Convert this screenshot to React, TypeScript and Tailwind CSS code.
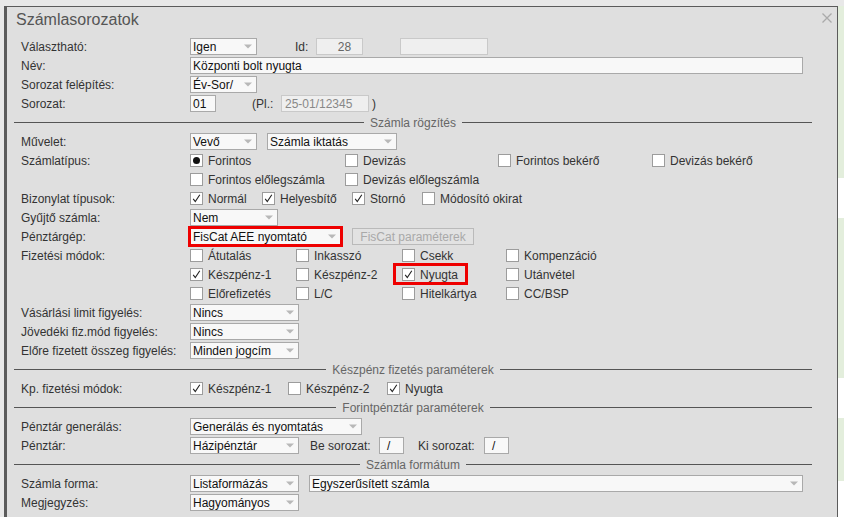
import React from "react";

const font = "font-['Liberation_Sans',Arial,sans-serif]";

function Arrow() {
  return (
    <svg width="8" height="5" viewBox="0 0 8 5" className="shrink-0">
      <path d="M0 0.5 H8 L4 4.5 Z" fill="#b8b8b8" />
    </svg>
  );
}

function Select({ value, className }: { value: string; className: string }) {
  return (
    <div
      className={`h-[17px] flex items-center justify-between border border-[#a9a9a9] bg-[#f8f8f8] pl-[2px] pr-[4px] text-[12px] text-[#111] leading-none ${className}`}
    >
      <span className="whitespace-nowrap">{value}</span>
      <Arrow />
    </div>
  );
}

function Input({ value, className }: { value: string; className: string }) {
  return (
    <div
      className={`h-[17px] flex items-center border border-[#a9a9a9] bg-[#f8f8f8] text-[12px] text-[#111] leading-none whitespace-nowrap ${className}`}
    >
      {value}
    </div>
  );
}

function Check({ label, checked, className = "" }: { label: string; checked?: boolean; className?: string }) {
  return (
    <div className={`flex items-center shrink-0 ${className}`}>
      <div className="w-[13px] h-[13px] border border-[#9c9c9c] bg-white flex items-center justify-center">
        {checked && (
          <svg width="11" height="11" viewBox="0 0 11 11">
            <path d="M2.2 5.8 L4.3 8.6 L8.8 1.8" fill="none" stroke="#222" strokeWidth="1.1" />
          </svg>
        )}
      </div>
      <span className="ml-[5px] text-[12px] text-[#333] whitespace-nowrap">{label}</span>
    </div>
  );
}

function Radio({ label, className = "" }: { label: string; className?: string }) {
  return (
    <div className={`flex items-center shrink-0 ${className}`}>
      <div className="w-[13px] h-[13px] border border-[#9c9c9c] bg-white flex items-center justify-center">
        <div className="w-[7px] h-[7px] rounded-full bg-[#111]" />
      </div>
      <span className="ml-[5px] text-[12px] text-[#333] whitespace-nowrap">{label}</span>
    </div>
  );
}

function Row({ label, children }: { label?: string; children?: React.ReactNode }) {
  return (
    <div className="h-[19px] flex items-center pl-[14px]">
      <div className="w-[169px] shrink-0 text-[12px] text-[#333] whitespace-nowrap">{label}</div>
      {children}
    </div>
  );
}

function Separator({ title }: { title: string }) {
  return (
    <div className="h-[19px] flex items-center ml-[7px] w-[798px]">
      <div className="flex-1 h-px bg-[#555]" />
      <span className="px-[6px] text-[12px] text-[#666] whitespace-nowrap">{title}</span>
      <div className="flex-1 h-px bg-[#555]" />
    </div>
  );
}

function Text({ children, className = "" }: { children: React.ReactNode; className?: string }) {
  return <span className={`text-[12px] text-[#333] whitespace-nowrap shrink-0 ${className}`}>{children}</span>;
}

export default function App() {
  return (
    <div className={`w-[844px] h-[517px] flex bg-[#e8e8e8] overflow-hidden ${font}`}>
      <div className="w-[4px] shrink-0" />
      <div className="mt-[6px] w-[834px] h-[520px] shrink-0 border-l-[3px] border-t border-r border-[#5b5b5b] bg-[#dfdfdf] flex flex-col">
        <div className="h-[30px] flex justify-between pl-[9px] pr-[5px]">
          <div className="pt-[3px] leading-[20px] text-[16px] text-[#555]">Számlasorozatok</div>
          <svg width="10" height="10" viewBox="0 0 10 10" className="mt-[6px]">
            <path d="M0.5 0.5 L9.5 9.5 M9.5 0.5 L0.5 9.5" stroke="#aaa" strokeWidth="1.3" />
          </svg>
        </div>

        <Row label="Választható:">
          <Select value="Igen" className="w-[67px]" />
          <Text className="ml-[38px] w-[21px]">Id:</Text>
          <div className="w-[47px] h-[17px] flex items-center justify-center pl-[10px] border border-[#c9c9c9] bg-[#efefef] text-[12px] text-[#666]">
            28
          </div>
          <div className="ml-[37px] w-[88px] h-[17px] border border-[#c9c9c9] bg-[#efefef]" />
        </Row>
        <Row label="Név:">
          <Input value="Központi bolt nyugta" className="w-[613px] pl-[2px]" />
        </Row>
        <Row label="Sorozat felépítés:">
          <Select value="Év-Sor/" className="w-[67px]" />
        </Row>
        <Row label="Sorozat:">
          <Input value="01" className="w-[26px] pl-[2px]" />
          <Text className="ml-[36px] w-[29px]">(Pl.:</Text>
          <div className="w-[88px] h-[17px] flex items-center pl-[3px] border border-[#c9c9c9] bg-[#efefef] text-[12px] text-[#888]">
            25-01/12345
          </div>
          <Text className="ml-[3px]">)</Text>
        </Row>

        <Separator title="Számla rögzítés" />

        <Row label="Művelet:">
          <Select value="Vevő" className="w-[67px]" />
          <Select value="Számla iktatás" className="w-[130px] ml-[10px]" />
        </Row>
        <Row label="Számlatípus:">
          <Radio label="Forintos" className="w-[155px]" />
          <Check label="Devizás" className="w-[153px]" />
          <Check label="Forintos bekérő" className="w-[154px]" />
          <Check label="Devizás bekérő" />
        </Row>
        <Row>
          <Check label="Forintos előlegszámla" className="w-[155px]" />
          <Check label="Devizás előlegszámla" />
        </Row>
        <Row label="Bizonylat típusok:">
          <Check label="Normál" checked className="w-[72px]" />
          <Check label="Helyesbítő" checked className="w-[90px]" />
          <Check label="Stornó" checked className="w-[70px]" />
          <Check label="Módosító okirat" />
        </Row>
        <Row label="Gyűjtő számla:">
          <Select value="Nem" className="w-[88px]" />
        </Row>
        <Row label="Pénztárgép:">
          <Select value="FisCat AEE nyomtató" className="w-[151px] border-[#ee0000] outline-[2px] outline-solid outline-[#ee0000]" />
          <div className="ml-[11px] w-[122px] h-[17px] flex items-center justify-center border border-[#bababa] bg-[#e2e2e2] text-[12px] text-[#a9a9a9] whitespace-nowrap">
            FisCat paraméterek
          </div>
        </Row>
        <Row label="Fizetési módok:">
          <Check label="Átutalás" className="w-[106px]" />
          <Check label="Inkasszó" className="w-[106px]" />
          <Check label="Csekk" className="w-[104px]" />
          <Check label="Kompenzáció" />
        </Row>
        <Row>
          <Check label="Készpénz-1" checked className="w-[106px]" />
          <Check label="Készpénz-2" className="w-[106px]" />
          <div className="relative w-[104px] self-stretch flex items-center">
            <Check label="Nyugta" checked />
            <div className="absolute left-[-9px] top-[-2px] w-[75px] h-[22px] border-[3px] border-[#ee0000]" />
          </div>
          <Check label="Utánvétel" />
        </Row>
        <Row>
          <Check label="Előrefizetés" className="w-[106px]" />
          <Check label="L/C" className="w-[106px]" />
          <Check label="Hitelkártya" className="w-[104px]" />
          <Check label="CC/BSP" />
        </Row>
        <Row label="Vásárlási limit figyelés:">
          <Select value="Nincs" className="w-[109px]" />
        </Row>
        <Row label="Jövedéki fiz.mód figyelés:">
          <Select value="Nincs" className="w-[109px]" />
        </Row>
        <Row label="Előre fizetett összeg figyelés:">
          <Select value="Minden jogcím" className="w-[109px]" />
        </Row>

        <Separator title="Készpénz fizetés paraméterek" />

        <Row label="Kp. fizetési módok:">
          <Check label="Készpénz-1" checked className="w-[98px]" />
          <Check label="Készpénz-2" className="w-[99px]" />
          <Check label="Nyugta" checked />
        </Row>

        <Separator title="Forintpénztár paraméterek" />

        <Row label="Pénztár generálás:">
          <Select value="Generálás és nyomtatás" className="w-[172px]" />
        </Row>
        <Row label="Pénztár:">
          <Select value="Házipénztár" className="w-[109px]" />
          <Text className="ml-[11px] w-[69px]">Be sorozat:</Text>
          <Input value="/" className="w-[25px] pl-[7px]" />
          <Text className="ml-[14px] w-[66px]">Ki sorozat:</Text>
          <Input value="/" className="w-[25px] pl-[7px]" />
        </Row>

        <Separator title="Számla formátum" />

        <Row label="Számla forma:">
          <Select value="Listaformázás" className="w-[109px]" />
          <Select value="Egyszerűsített számla" className="w-[494px] ml-[10px]" />
        </Row>
        <Row label="Megjegyzés:">
          <Select value="Hagyományos" className="w-[109px]" />
        </Row>
      </div>
      <div className="mt-[6px] flex-1 flex flex-col">
        <div className="h-[172px] bg-[#e3eedc]" />
        <div className="h-[40px] bg-white" />
        <div className="h-[160px] bg-[#e3eedc]" />
        <div className="h-[40px] bg-white" />
        <div className="h-[63px] bg-[#e3eedc]" />
        <div className="flex-1 bg-white" />
      </div>
    </div>
  );
}
